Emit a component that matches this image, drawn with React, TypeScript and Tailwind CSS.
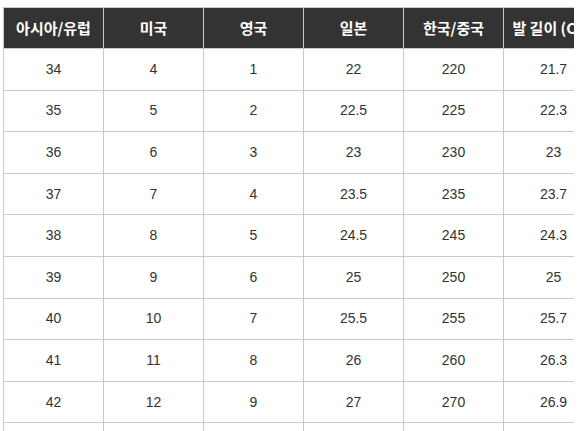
const HEADERS = ["아시아/유럽", "미국", "영국", "일본", "한국/중국", "발 길이 (CM)"];

const ROWS: (string | number)[][] = [
  [34, 4, 1, 22, 220, 21.7],
  [35, 5, 2, 22.5, 225, 22.3],
  [36, 6, 3, 23, 230, 23],
  [37, 7, 4, 23.5, 235, 23.7],
  [38, 8, 5, 24.5, 245, 24.3],
  [39, 9, 6, 25, 250, 25],
  [40, 10, 7, 25.5, 255, 25.7],
  [41, 11, 8, 26, 260, 26.3],
  [42, 12, 9, 27, 270, 26.9],
  [43, 13, 10, 28, 280, 27.5],
];

export default function App() {
  return (
    <div className="h-[431px] overflow-hidden bg-white pl-[3px] pt-[7px]">
      <div className="w-[571px] overflow-hidden">
        <table
          className="w-[601px] table-fixed border-collapse"
          style={{ fontFamily: '"Liberation Sans", "Noto Sans CJK KR", sans-serif' }}
        >
          <thead>
            <tr>
              {HEADERS.map((h) => (
                <th
                  key={h}
                  className="h-[41px] w-[100px] whitespace-nowrap border border-[#c9c9c9] bg-[#333333] p-0 text-center text-[15px] font-bold text-white"
                  style={{ fontFamily: '"Noto Sans CJK KR", "Noto Sans", sans-serif' }}
                >
                  {h}
                </th>
              ))}
            </tr>
          </thead>
          <tbody>
            {ROWS.map((row, i) => (
              <tr key={i}>
                {row.map((v, j) => (
                  <td
                    key={j}
                    className="h-[41.6px] border border-[#c9c9c9] p-0 text-center text-[14px] text-[#333]"
                  >
                    {v}
                  </td>
                ))}
              </tr>
            ))}
          </tbody>
        </table>
      </div>
    </div>
  );
}
